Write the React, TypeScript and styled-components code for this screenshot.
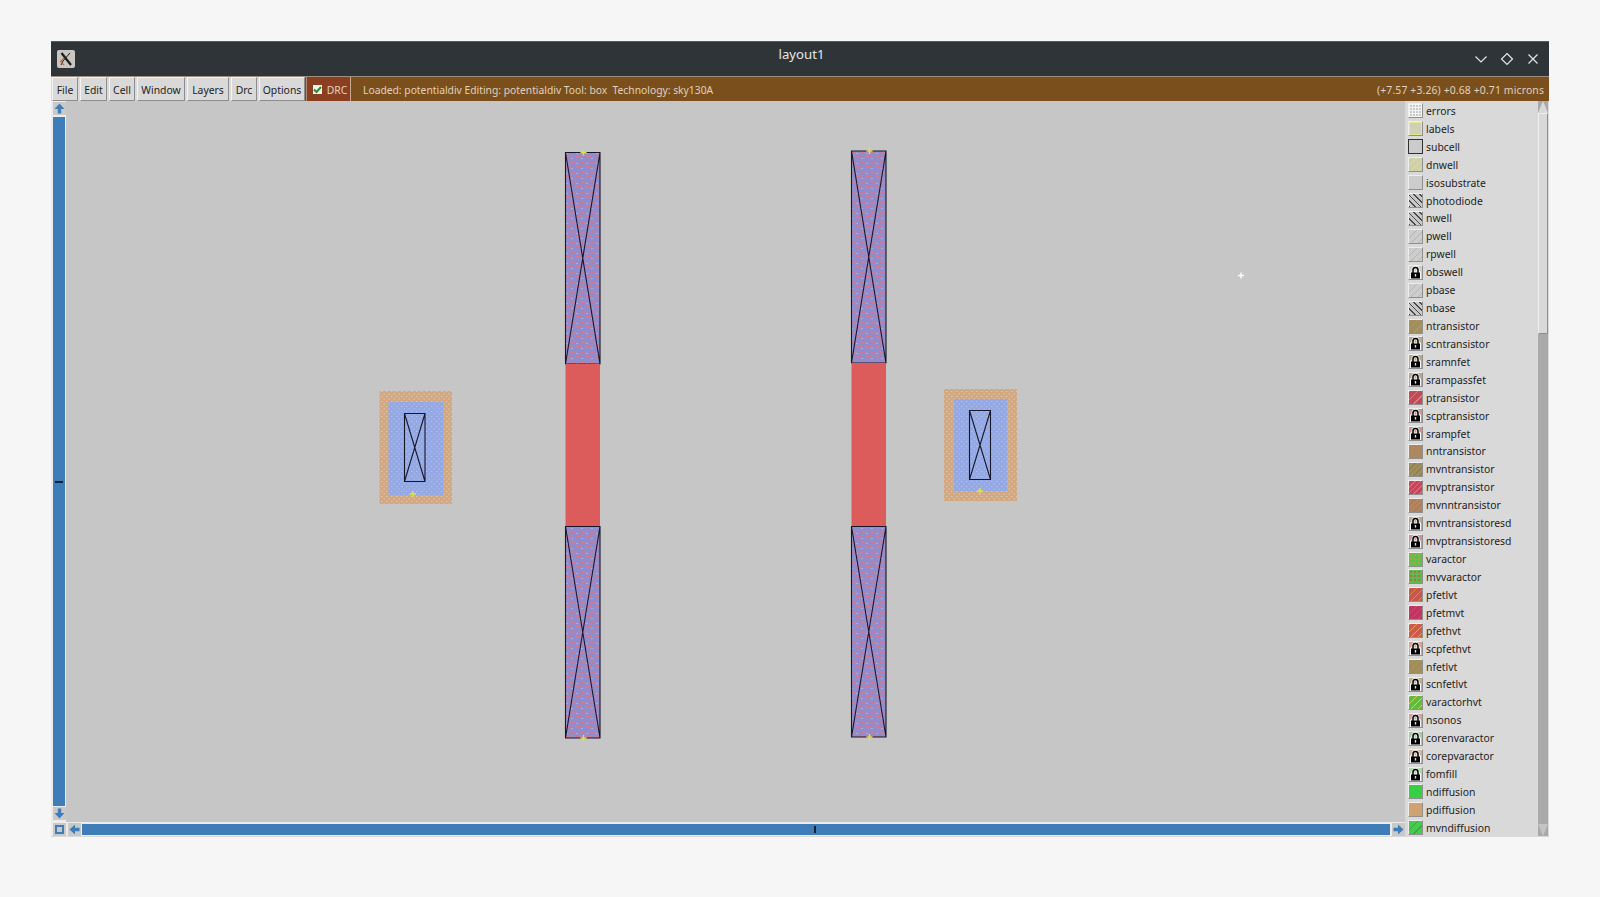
import React from 'react';
import styled, { createGlobalStyle } from 'styled-components';

const GlobalStyle = createGlobalStyle`
  html, body {
    margin: 0;
    padding: 0;
    background: #f6f6f6;
    font-family: "Noto Sans", "Open Sans", sans-serif;
  }
`;

type Swatch =
  | 'errors' | 'labels' | 'subcell' | 'dnwell' | 'plain' | 'black' | 'grey'
  | 'olive' | 'red' | 'brown' | 'oliveHatch' | 'redHatch' | 'brownHatch'
  | 'green' | 'greenHatch' | 'orange' | 'crimson' | 'hot' | 'nfet' | 'yellowGreen'
  | 'lime' | 'tan' | 'limeHatch';

type Layer = { name: string; swatch: Swatch; lock?: string };

const LAYERS: Layer[] = [
  { name: 'errors', swatch: 'errors' },
  { name: 'labels', swatch: 'labels' },
  { name: 'subcell', swatch: 'subcell' },
  { name: 'dnwell', swatch: 'dnwell' },
  { name: 'isosubstrate', swatch: 'plain' },
  { name: 'photodiode', swatch: 'black' },
  { name: 'nwell', swatch: 'black' },
  { name: 'pwell', swatch: 'grey' },
  { name: 'rpwell', swatch: 'grey' },
  { name: 'obswell', swatch: 'plain', lock: '#cfcfc8' },
  { name: 'pbase', swatch: 'grey' },
  { name: 'nbase', swatch: 'black' },
  { name: 'ntransistor', swatch: 'olive' },
  { name: 'scntransistor', swatch: 'olive', lock: '#b5ab85' },
  { name: 'sramnfet', swatch: 'olive', lock: '#b5ab85' },
  { name: 'srampassfet', swatch: 'olive', lock: '#b5ab85' },
  { name: 'ptransistor', swatch: 'red' },
  { name: 'scptransistor', swatch: 'red', lock: '#d48f95' },
  { name: 'srampfet', swatch: 'red', lock: '#d48f95' },
  { name: 'nntransistor', swatch: 'brown' },
  { name: 'mvntransistor', swatch: 'oliveHatch' },
  { name: 'mvptransistor', swatch: 'redHatch' },
  { name: 'mvnntransistor', swatch: 'brownHatch' },
  { name: 'mvntransistoresd', swatch: 'olive', lock: '#b5ab85' },
  { name: 'mvptransistoresd', swatch: 'red', lock: '#d48f95' },
  { name: 'varactor', swatch: 'green' },
  { name: 'mvvaractor', swatch: 'greenHatch' },
  { name: 'pfetlvt', swatch: 'orange' },
  { name: 'pfetmvt', swatch: 'crimson' },
  { name: 'pfethvt', swatch: 'hot' },
  { name: 'scpfethvt', swatch: 'hot', lock: '#d8a090' },
  { name: 'nfetlvt', swatch: 'nfet' },
  { name: 'scnfetlvt', swatch: 'nfet', lock: '#bdb08c' },
  { name: 'varactorhvt', swatch: 'yellowGreen' },
  { name: 'nsonos', swatch: 'red', lock: '#cfa0a4' },
  { name: 'corenvaractor', swatch: 'green', lock: '#9fd39a' },
  { name: 'corepvaractor', swatch: 'tan', lock: '#d8b596' },
  { name: 'fomfill', swatch: 'lime', lock: '#a8dca0' },
  { name: 'ndiffusion', swatch: 'lime' },
  { name: 'pdiffusion', swatch: 'tan' },
  { name: 'mvndiffusion', swatch: 'limeHatch' },
];

const hatch = (base: string, line: string, dir = 45, gap = 4) =>
  `repeating-linear-gradient(${dir}deg, ${line} 0 1px, ${base} 1px ${gap}px)`;

const SWATCHES: Record<Swatch, string> = {
  errors: 'repeating-linear-gradient(0deg, #f4f4f4 0 1px, transparent 1px 3px), repeating-linear-gradient(90deg, #f4f4f4 0 1px, #c8c8c8 1px 3px)',
  labels: 'linear-gradient(#d0d0b8, #d0d0b8)',
  subcell: 'linear-gradient(#cbcbcb, #cbcbcb)',
  dnwell: hatch('#cfcfa8', '#dcdcb4', 135, 5),
  plain: 'linear-gradient(#cccccc, #cccccc)',
  black: hatch('#c8c8c8', '#4a4a4a', 45, 4),
  grey: hatch('#cdcdcd', '#b8b4ae', 135, 5),
  olive: hatch('#a08f5c', '#a99a66', 135, 6),
  red: hatch('#c24a56', '#de7d86', 135, 6),
  brown: 'linear-gradient(#ae8660, #ae8660)',
  oliveHatch: hatch('#a08f5c', '#8c7f50', 135, 4),
  redHatch: hatch('#c74558', '#dd6a78', 135, 4),
  brownHatch: hatch('#b38560', '#a87a58', 135, 4),
  green: 'radial-gradient(circle, #a8a448 1px, #5fc04a 1.5px) 0 0 / 4px 4px',
  greenHatch: 'radial-gradient(circle, #9c7c44 1px, #62b84c 1.5px) 0 0 / 4px 4px',
  orange: hatch('#c7564c', '#d58a50', 135, 5),
  crimson: hatch('#c03662', '#cf4a70', 135, 5),
  hot: hatch('#cc5b48', '#eca04e', 135, 5),
  nfet: hatch('#a5905b', '#978a4e', 135, 5),
  yellowGreen: hatch('#62bb40', '#d4d44a', 135, 5),
  lime: 'linear-gradient(#35d046, #35d046)',
  tan: 'linear-gradient(#cfa272, #cfa272)',
  limeHatch: hatch('#3ed04a', '#4d9a44', 135, 6),
};

const Page = styled.div`
  width: 1600px;
  height: 897px;
  padding: 41px 51px 60px;
  box-sizing: border-box;
  overflow: hidden;
`;

const Window = styled.div`
  height: 796px;
  display: flex;
  flex-direction: column;
  background: #d9d9d9;
`;

const TitleBar = styled.div`
  height: 35px;
  flex: none;
  display: flex;
  align-items: center;
  justify-content: space-between;
  background: #2f3438;
  border-top: 1px solid #54585b;
  box-sizing: border-box;
  padding: 0 9px 0 6px;
  position: relative;
`;

const AppIcon = styled.div`
  width: 18px;
  height: 18px;
  background: #c9c6c2;
  border-radius: 2px;
  overflow: hidden;
`;

const Title = styled.div`
  position: absolute;
  left: 3px;
  right: 0;
  top: 2px;
  text-align: center;
  color: #e4e6e6;
  font-size: 13.2px;
  line-height: 20px;
`;

const WindowButtons = styled.div`
  display: flex;
  gap: 12px;
  align-items: center;
`;

const ToolBar = styled.div`
  height: 25px;
  flex: none;
  display: flex;
  align-items: stretch;
  background: #7a4f1c;
  border-top: 1px solid #9c8f7e;
  box-sizing: border-box;
  font-size: 10.4px;
`;

const Menu = styled.div`
  display: flex;
  align-items: stretch;
  padding-left: 1px;
  gap: 2px;
  background: #d9d9d9;
`;

const MenuButton = styled.div<{ $w: number }>`
  width: ${(p) => p.$w}px;
  display: flex;
  align-items: center;
  justify-content: center;
  padding-top: 1px;
  background: #d9d9d9;
  color: #222;
  box-sizing: border-box;
  border: 1px solid;
  border-color: #f4f4f4 #8d8d8d #8d8d8d #f4f4f4;
`;

const DrcButton = styled.div`
  width: 45px;
  flex: none;
  display: flex;
  align-items: center;
  justify-content: center;
  gap: 5px;
  padding: 1px 0 0 3px;
  background: #8a4020;
  color: #e4d0c0;
  margin-left: 1px;
  border-left: 1px solid #b08a70;
  border-right: 1px solid #c9a890;
  box-sizing: border-box;
`;

const Check = styled.div`
  width: 9px;
  height: 9px;
  background: #f2f2f2;
  display: flex;
`;

const Status = styled.div`
  flex: 1;
  display: flex;
  align-items: center;
  justify-content: space-between;
  padding: 1px 5px 0 12px;
  color: #e0d2bd;
  white-space: nowrap;
`;

const Message = styled.span`
  font-size: 10.3px;
`;

const Coords = styled.span`
  letter-spacing: 0.14px;
`;

const Body = styled.div`
  flex: 1;
  min-height: 0;
  display: grid;
  grid-template-columns: 15px 1339px 1fr;
  grid-template-rows: 721px 14px;
`;

const VScroll = styled.div`
  display: flex;
  flex-direction: column;
  align-items: center;
  padding: 1px 1px 2px 2px;
  background: #ececec;
`;

const ArrowButton = styled.div`
  width: 13px;
  height: 13px;
  flex: none;
  background: #c9c9c9;
  display: flex;
  align-items: center;
  justify-content: center;
`;

const ScrollFill = styled.div`
  flex: 1;
  align-self: stretch;
  margin: 2px 0 1px;
  background: #3f7db8;
  position: relative;
`;

const Tick = styled.div`
  position: absolute;
  left: 2px;
  top: 364px;
  width: 8px;
  height: 2px;
  background: #10233a;
`;

const Canvas = styled.svg`
  display: block;
  width: 1339px;
  height: 721px;
  background: #c6c6c6;
`;

const LayerPanel = styled.div`
  grid-row: 1 / 3;
  grid-column: 3;
  display: flex;
  background: #d9d9d9;
  min-height: 0;
  overflow: hidden;
`;

const LayerList = styled.div`
  flex: 1;
  padding: 1px 0 0 3px;
  display: flex;
  flex-direction: column;
`;

const LayerRow = styled.div`
  height: 17.925px;
  flex: none;
  display: flex;
  align-items: center;
  gap: 3px;
  font-size: 10.4px;
  color: #222;
  white-space: nowrap;
`;

const SwatchBox = styled.div<{ $bg: string; $outline: boolean; $yellow: boolean }>`
  width: 15px;
  height: 15px;
  flex: none;
  box-sizing: border-box;
  background: ${(p) => p.$bg};
  border: 1px solid;
  border-color: ${(p) => (p.$outline ? '#303030 #303030 #303030 #303030' : '#eeeeee #8f8f8f #8f8f8f #eeeeee')};
  box-shadow: ${(p) => (p.$yellow ? 'inset 0 0 0 1px #e6e68a' : 'none')};
  display: flex;
  align-items: center;
  justify-content: center;
`;

const Scrollbar = styled.div`
  width: 10px;
  flex: none;
  margin: 0 1px 0 0;
  display: flex;
  flex-direction: column;
  background: #a9a9a9;
`;

const Thumb = styled.div`
  height: 221px;
  background: #d9d9d9;
  box-sizing: border-box;
  border: 1px solid;
  border-color: #f0f0f0 #8f8f8f #8f8f8f #f0f0f0;
`;

const Triangle = styled.div<{ $down?: boolean }>`
  height: 12px;
  flex: none;
  background: ${(p) => (p.$down ? '#c4c4c4' : '#d9d9d9')};
  clip-path: ${(p) => (p.$down ? 'polygon(0 0, 100% 0, 50% 100%)' : 'polygon(50% 0, 100% 100%, 0 100%)')};
`;

const ScrollEnd = styled.div`
  flex: 1;
`;

const HScroll = styled.div`
  grid-column: 1 / 3;
  display: flex;
  align-items: center;
  background: #ececec;
  padding: 0 0 0 2px;
  gap: 2px;
`;

const HFill = styled.div`
  flex: 1;
  height: 11px;
  margin-left: -1px;
  background: #3f7db8;
  position: relative;
`;

const HTick = styled.div`
  position: absolute;
  left: 732px;
  top: 2px;
  width: 2px;
  height: 7px;
  background: #10233a;
`;

const Lock = () => (
  <svg width="13" height="13" viewBox="0 0 13 13">
    <path d="M4 7V4a2.5 2.5 0 0 1 5 0v3" fill="none" stroke="#f6f6f6" strokeWidth="3" />
    <rect x="1" y="5.5" width="11" height="7.5" fill="#f6f6f6" />
    <path d="M4 7V4a2.5 2.5 0 0 1 5 0v3" fill="none" stroke="#000" strokeWidth="1.5" />
    <rect x="2" y="6.5" width="9" height="6" fill="#000" />
    <rect x="5.8" y="8" width="1.4" height="2.6" fill="#ddd" />
  </svg>
);

const Arrow = ({ rotate }: { rotate: number }) => (
  <svg width="11" height="11" viewBox="0 0 11 11" style={{ transform: `rotate(${rotate}deg)` }}>
    <path d="M5.5 0.5 10.5 6H7.2V10.5H3.8V6H0.5Z" fill="#3f7db8" />
  </svg>
);

type BarProps = { x: number; y: number; w: number; h: number };

// one transistor stack end, hatched poly/diff with the box cross on it
const CrossBox = ({ x, y, w, h, fill }: BarProps & { fill: string }) => (
  <g>
    <rect x={x} y={y} width={w} height={h} fill={fill} />
    <path
      d={`M${x} ${y}H${x + w}V${y + h}H${x}Z M${x} ${y}L${x + w} ${y + h} M${x + w} ${y}L${x} ${y + h}`}
      fill="none"
      stroke="#17172a"
      strokeWidth="1.1"
    />
  </g>
);

const Plus = ({ x, y, color = '#e6df4c' }: { x: number; y: number; color?: string }) => (
  <path d={`M${x - 3} ${y}H${x + 3} M${x} ${y - 3}V${y + 3}`} stroke={color} strokeWidth="1.4" />
);

const Contact = ({ outer, blue, box, plus }: { outer: BarProps; blue: BarProps; box: BarProps; plus: [number, number] }) => (
  <g>
    <rect x={outer.x} y={outer.y} width={outer.w} height={outer.h} fill="url(#tanDots)" />
    <rect x={blue.x} y={blue.y} width={blue.w} height={blue.h} fill="url(#blueDots)" />
    <CrossBox {...box} fill="none" />
    <Plus x={plus[0]} y={plus[1]} />
  </g>
);

const Column = ({ x, top, midTop, midBottom, bottom }: { x: number; top: number; midTop: number; midBottom: number; bottom: number }) => (
  <g>
    <CrossBox x={x} y={top} w={34.5} h={midTop - top} fill="url(#polyDots)" />
    <rect x={x} y={midTop} width={34.5} height={midBottom - midTop} fill="#dc5c5c" />
    <CrossBox x={x} y={midBottom} w={34.5} h={bottom - midBottom} fill="url(#polyDots)" />
    <Plus x={x + 18} y={top} />
    <Plus x={x + 18} y={bottom} />
  </g>
);

const App: React.FC = () => {
  return (
    <Page>
      <GlobalStyle />
      <Window>
        <TitleBar>
          <AppIcon>
            <svg width="18" height="18" viewBox="0 0 18 18">
              <path d="M4.5 3 14 15" stroke="#1c1c1c" strokeWidth="2.2" />
              <path d="M13 3 6 11 4 15" stroke="#1c1c1c" strokeWidth="1" fill="none" />
              <path d="M7 8 3.5 11.5 7 15" stroke="#c8643c" strokeWidth="1.2" fill="none" />
            </svg>
          </AppIcon>
          <Title>layout1</Title>
          <WindowButtons>
            <svg width="14" height="14" viewBox="0 0 14 14">
              <path d="M1.5 4.5 7 10l5.5-5.5" fill="none" stroke="#e4e6e6" strokeWidth="1.2" />
            </svg>
            <svg width="14" height="14" viewBox="0 0 14 14">
              <path d="M7 1.5 12.5 7 7 12.5 1.5 7Z" fill="none" stroke="#e4e6e6" strokeWidth="1.2" />
            </svg>
            <svg width="14" height="14" viewBox="0 0 14 14">
              <path d="M2.5 2.5l9 9M11.5 2.5l-9 9" fill="none" stroke="#e4e6e6" strokeWidth="1.2" />
            </svg>
          </WindowButtons>
        </TitleBar>
        <ToolBar>
          <Menu>
            <MenuButton $w={26}>File</MenuButton>
            <MenuButton $w={27}>Edit</MenuButton>
            <MenuButton $w={26}>Cell</MenuButton>
            <MenuButton $w={48}>Window</MenuButton>
            <MenuButton $w={42}>Layers</MenuButton>
            <MenuButton $w={26}>Drc</MenuButton>
            <MenuButton $w={46}>Options</MenuButton>
          </Menu>
          <DrcButton>
            <Check>
              <svg width="9" height="9" viewBox="0 0 9 9">
                <path d="M1 4.5 3.5 7 8 2" fill="none" stroke="#2e8b2e" strokeWidth="2" />
              </svg>
            </Check>
            DRC
          </DrcButton>
          <Status>
            <Message>Loaded: potentialdiv Editing: potentialdiv Tool: box&nbsp; Technology: sky130A</Message>
            <Coords>(+7.57 +3.26) +0.68 +0.71 microns</Coords>
          </Status>
        </ToolBar>
        <Body>
          <VScroll>
            <ArrowButton>
              <Arrow rotate={0} />
            </ArrowButton>
            <ScrollFill>
              <Tick />
            </ScrollFill>
            <ArrowButton>
              <Arrow rotate={180} />
            </ArrowButton>
          </VScroll>
          <Canvas viewBox="66 101 1339 721">
            <defs>
              <pattern id="tanDots" width="5" height="5" patternUnits="userSpaceOnUse">
                <rect width="5" height="5" fill="#d2a882" />
                <rect x="1" y="1" width="1.4" height="1" fill="#dfcbb0" />
                <rect x="3.5" y="3.5" width="1.4" height="1" fill="#dfcbb0" />
              </pattern>
              <pattern id="blueDots" width="5" height="5" patternUnits="userSpaceOnUse">
                <rect width="5" height="5" fill="#93a8e4" />
                <rect x="1" y="1" width="1.4" height="1" fill="#b4c2e6" />
                <rect x="3.5" y="3.5" width="1.4" height="1" fill="#b4c2e6" />
              </pattern>
              <pattern id="polyDots" width="10" height="10" patternUnits="userSpaceOnUse">
                <rect width="10" height="10" fill="#918dcc" />
                <rect x="0" y="1" width="6" height="1.8" fill="#cf7a92" />
                <rect x="5" y="6" width="6" height="1.8" fill="#cf7a92" />
                <rect x="-1" y="6" width="2" height="1.8" fill="#cf7a92" />
                <rect x="6" y="3" width="2" height="1" fill="#a8acdf" />
                <rect x="1" y="8" width="2" height="1" fill="#a8acdf" />
              </pattern>
            </defs>
            <Contact
              outer={{ x: 379.5, y: 391, w: 72.5, h: 113 }}
              blue={{ x: 388.5, y: 402, w: 55, h: 93 }}
              box={{ x: 404.5, y: 413.5, w: 20.5, h: 68 }}
              plus={[413, 494]}
            />
            <Contact
              outer={{ x: 944, y: 389, w: 73, h: 112 }}
              blue={{ x: 954, y: 399, w: 53, h: 92 }}
              box={{ x: 969.5, y: 410.5, w: 21, h: 69 }}
              plus={[980, 491]}
            />
            <Column x={565.5} top={152.5} midTop={364} midBottom={526.5} bottom={738} />
            <Column x={851.5} top={151} midTop={363} midBottom={526.5} bottom={737} />
            <Plus x={1241} y={275.5} color="#ffffff" />
          </Canvas>
          <LayerPanel>
            <LayerList>
              {LAYERS.map((l) => (
                <LayerRow key={l.name}>
                  <SwatchBox
                    $bg={l.lock ? `linear-gradient(${l.lock}, ${l.lock})` : SWATCHES[l.swatch]}
                    $outline={l.name === 'subcell'}
                    $yellow={l.name === 'labels'}
                  >
                    {l.lock && <Lock />}
                  </SwatchBox>
                  {l.name}
                </LayerRow>
              ))}
            </LayerList>
            <Scrollbar>
              <Triangle />
              <Thumb />
              <ScrollEnd />
              <Triangle $down />
            </Scrollbar>
          </LayerPanel>
          <HScroll>
            <ArrowButton>
              <svg width="9" height="9" viewBox="0 0 9 9">
                <rect x="1" y="1" width="7" height="7" fill="none" stroke="#3f7db8" strokeWidth="2" />
              </svg>
            </ArrowButton>
            <ArrowButton>
              <Arrow rotate={-90} />
            </ArrowButton>
            <HFill>
              <HTick />
            </HFill>
            <ArrowButton>
              <Arrow rotate={90} />
            </ArrowButton>
          </HScroll>
        </Body>
      </Window>
    </Page>
  );
};

export default App;
